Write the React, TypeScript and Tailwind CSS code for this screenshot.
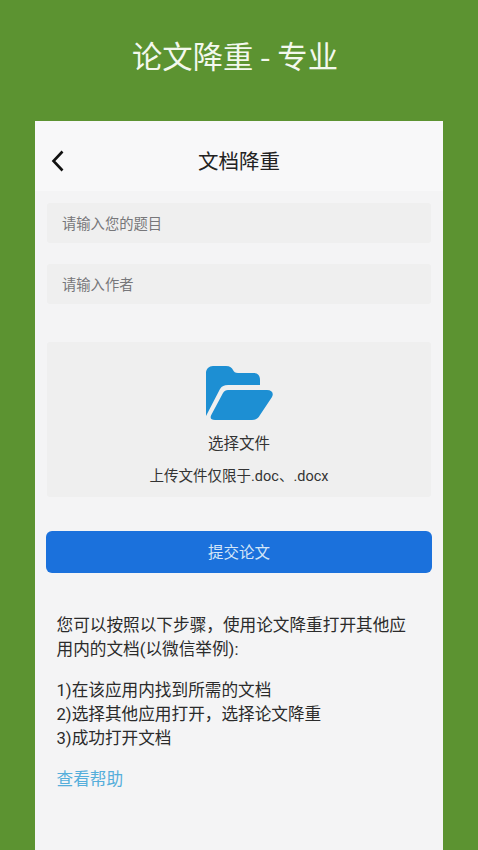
import React from 'react';

const cjk = "font-['Noto_Sans_CJK_SC','Noto_Sans',sans-serif]";
const mixed = "font-['Roboto','Noto_Sans_CJK_SC',sans-serif]";

function FolderIcon() {
    return (
        <svg width="68" height="56" viewBox="0 0 68 56" className="ml-px block">
            <path
                d="M0 7C0 3 3 0 7 0H20C24 0 26 2 27 4C28 6 29 7 32 7H48C52 7 54 10 54 14V19H22C18 19 16 20 14 23L0 50Z"
                fill="#1d8fd3"
            />
            <path
                d="M22 24H61C66 24 68 27 66 31L54 49C52 52.500 50 54 46 54H9C5 54 3.500 52 5.500 48.500L17 27C18 25 20 24 22 24Z"
                fill="#1d8fd3"
            />
        </svg>
    );
}

function Field({ label }: { label: string }) {
    return (
        <div className={`${cjk} flex h-10 items-center rounded-[3px] bg-[#efefef] pl-[15px] text-[14.300px] text-[#77777a]`}>
            {label}
        </div>
    );
}

export default function App() {
    return (
        <div className={`${mixed} flex h-[850px] w-[478px] flex-col overflow-hidden bg-[#5c9331]`}>
            <h1 className={`${cjk} flex h-[121px] shrink-0 justify-center pt-[33px] pr-[8px] text-[30.300px] leading-[45px] font-normal text-[#f3f8ee]`}>
                论文降重 - 专业
            </h1>

            <div className="mx-[35px] flex flex-1 flex-col bg-[#f4f4f5]">
                {/* Header */}
                <div className="relative flex h-[70px] shrink-0 items-center justify-center bg-[#f8f8f9]">
                    <svg width="14" height="22" viewBox="0 0 14 22" className="absolute top-[29px] left-4">
                        <path d="M11.500 1.500L2.500 11L11.500 20.500" fill="none" stroke="#111" strokeWidth="2.600" />
                    </svg>
                    <span className={`${cjk} pt-[8px] text-[20.500px] text-[#222]`}>文档降重</span>
                </div>

                <div className="flex flex-col px-3 pt-3">
                    <Field label="请输入您的题目" />
                    <div className="mt-[21px]">
                        <Field label="请输入作者" />
                    </div>

                    {/* Upload */}
                    <div className="mt-[38px] flex h-[155px] flex-col items-center rounded-[3px] bg-[#efefef] pt-6">
                        <FolderIcon />
                        <span className={`${cjk} mt-[8px] text-[15.500px] leading-6 text-[#333]`}>选择文件</span>
                        <span className={`${mixed} mt-[11px] text-[14.500px] leading-6 text-[#333]`}>上传文件仅限于.doc、.docx</span>
                    </div>

                    <button className={`${cjk} -mx-px mt-[34px] h-[42px] rounded-md bg-[#1b71dc] text-[15.500px] text-[#d5e6f8]`}>
                        提交论文
                    </button>
                </div>

                {/* Steps */}
                <div className={`${mixed} pt-[41px] pr-[22px] pl-[21.500px] text-[16.650px] leading-6 text-[#2b2b2b]`}>
                    <p>您可以按照以下步骤，使用论文降重打开其他应用内的文档(以微信举例):</p>
                    <div className="mt-[17px]">
                        <p>1)在该应用内找到所需的文档</p>
                        <p>2)选择其他应用打开，选择论文降重</p>
                        <p>3)成功打开文档</p>
                    </div>
                    <p className="mt-[17px] text-[#55aedb]">查看帮助</p>
                </div>
            </div>
        </div>
    );
}
